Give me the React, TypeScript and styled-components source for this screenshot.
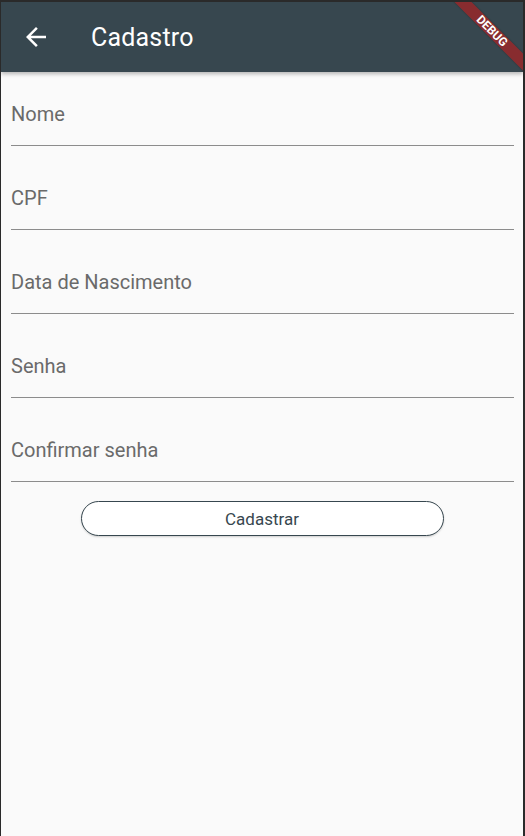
import React from "react";
import styled, { createGlobalStyle } from "styled-components";

const Global = createGlobalStyle`
  html, body { margin: 0; padding: 0; background: #2a2a2a; }
  body { font-family: Roboto, "Noto Sans", Arial, sans-serif; }
  * { box-sizing: border-box; }
`;

const Window = styled.div`
  width: 525px;
  height: 836px;
  padding: 2px 2px 0 1px;
  background: #2a2a2a;
`;

const Screen = styled.div`
  position: relative;
  height: 100%;
  background: #fafafa;
  overflow: hidden;
  display: flex;
  flex-direction: column;
`;

const AppBar = styled.header`
  height: 70px;
  flex: none;
  background: #37474f;
  display: flex;
  align-items: center;
  padding-left: 20px;
  gap: 40px;
  box-shadow: 0 2px 4px rgba(0, 0, 0, 0.28);
  position: relative;
  z-index: 1;
`;

const BackButton = styled.button`
  width: 30px;
  height: 30px;
  padding: 0;
  border: 0;
  background: transparent;
  display: flex;
  align-items: center;
  justify-content: center;
  cursor: pointer;
`;

const Title = styled.h1`
  margin: 0;
  color: #fff;
  font-size: 25px;
  font-weight: 400;
  letter-spacing: 0.2px;
`;

const Form = styled.form`
  display: flex;
  flex-direction: column;
  gap: 10px;
  padding: 0 9px 0 10px;
`;

const Field = styled.label`
  height: 74px;
  display: flex;
  align-items: flex-end;
  border-bottom: 1px solid #8c8c8c;
  padding-bottom: 19px;
`;

const Placeholder = styled.span`
  font-size: 20px;
  color: #6a6a6a;
  line-height: 24px;
`;

const Actions = styled.div`
  display: flex;
  justify-content: center;
  padding-top: 19px;
`;

const PillButton = styled.button`
  width: 363px;
  height: 35px;
  border-radius: 18px;
  border: 1.2px solid #37474f;
  background: #fff;
  color: #37474f;
  font-family: Roboto, Arial, sans-serif;
  font-size: 17px;
  box-shadow: 0 1px 2px rgba(0, 0, 0, 0.18);
  cursor: pointer;
`;

const Banner = styled.div`
  position: absolute;
  top: 23px;
  left: 431px;
  width: 120px;
  height: 12px;
  transform: rotate(45deg);
  background: rgba(183, 28, 28, 0.63);
  color: #fff;
  font-size: 12px;
  font-weight: 700;
  line-height: 12px;
  text-align: center;
  z-index: 2;
  box-shadow: 0 0 2px rgba(0, 0, 0, 0.3);
`;

const fields = ["Nome", "CPF", "Data de Nascimento", "Senha", "Confirmar senha"];

export default function App() {
  return (
    <>
      <Global />
      <Window>
        <Screen>
          <AppBar>
            <BackButton aria-label="Voltar">
              <svg width="30" height="30" viewBox="0 0 24 24" fill="#fff">
                <path d="M20 11H7.83l5.59-5.59L12 4l-8 8 8 8 1.41-1.41L7.83 13H20v-2z" />
              </svg>
            </BackButton>
            <Title>Cadastro</Title>
          </AppBar>
          <Banner>DEBUG</Banner>
          <Form onSubmit={(e) => e.preventDefault()}>
            {fields.map((f) => (
              <Field key={f}>
                <Placeholder>{f}</Placeholder>
              </Field>
            ))}
          </Form>
          <Actions>
            <PillButton type="button">Cadastrar</PillButton>
          </Actions>
        </Screen>
      </Window>
    </>
  );
}
